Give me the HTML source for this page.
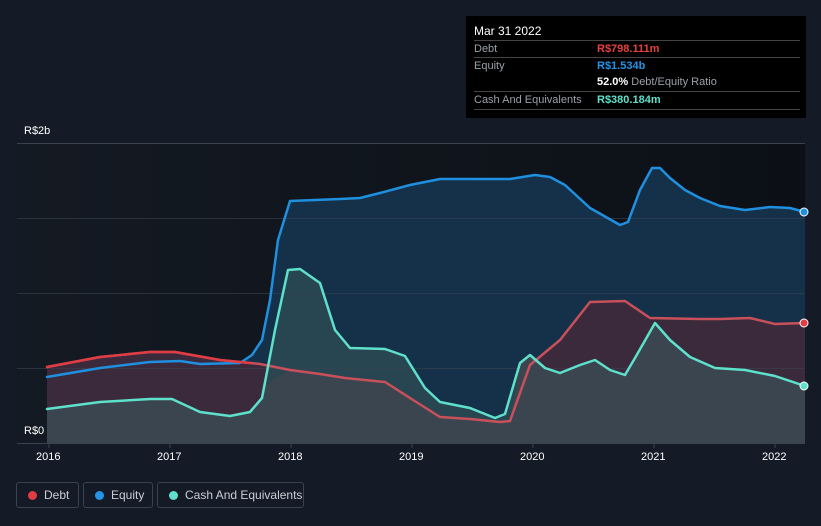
<!DOCTYPE html>
<html><head><meta charset="utf-8"><style>
body{margin:0;width:821px;height:526px;background:#151b26;font-family:"Liberation Sans",sans-serif;overflow:hidden;position:relative}
.tt{position:absolute;left:466px;top:16px;width:340px;height:102px;background:#000;color:#fff;font-size:11px}
.tt .r{position:absolute;left:8px;width:326px;border-top:1px solid #444;height:17px}
.lbl{color:#9aa0a8;position:absolute;left:0;top:2px}
.val{position:absolute;left:123px;top:2px;font-weight:bold}
.ax{position:absolute;color:#fff;font-size:11px}
.leg{position:absolute;top:482px;height:26px;border:1px solid #3a4150;border-radius:3px;color:#c9ced6;font-size:12px;box-sizing:border-box}
.leg i{position:absolute;left:11px;top:8px;width:9px;height:9px;border-radius:50%}
.leg span{position:absolute;left:27px;top:5px}
</style></head><body>
<svg width="821" height="526" style="position:absolute;left:0;top:0">
<defs><linearGradient id="bg" x1="0" x2="1"><stop offset="0" stop-color="#141a23"/><stop offset="1" stop-color="#0c1016"/></linearGradient></defs>
<rect x="17" y="143" width="788" height="300" fill="url(#bg)"/>
<path d="M47,377 L100,368 L150,362 L180,361 L200,364 L240,363 L252,355 L262,340 L270,300 L278,240 L290,201 L340,199 L360,198 L380,193 L410,185 L440,179 L500,179 L510,179 L535,175 L550,177 L565,185 L590,208 L620,225 L628,222 L640,190 L652,168 L660,168 L670,178 L685,190 L700,198 L720,206 L745,210 L770,207 L790,208 L805,212 L805,443 L47,443Z" fill="#153049"/>
<path d="M47,367 L100,357 L150,352 L175,352 L220,360 L260,364 L290,370 L320,374 L345,378 L385,382 L410,398 L440,417 L470,419 L500,422 L510,421 L530,365 L560,340 L590,302 L625,301 L650,318 L700,319 L720,319 L750,318 L775,324 L805,323 L805,443 L47,443Z" fill="#3a2a3c"/>
<path d="M47,409 L100,402 L150,399 L172,399 L200,412 L230,416 L250,412 L262,398 L275,330 L288,270 L300,269 L320,283 L335,330 L350,348 L385,349 L405,356 L425,388 L440,402 L470,408 L495,418 L505,414 L520,363 L530,355 L545,368 L560,373 L580,365 L595,360 L610,370 L625,375 L635,358 L655,323 L670,340 L690,357 L715,368 L745,370 L775,376 L805,386 L805,443 L47,443Z" fill="#2b4a52" opacity="0.85"/>
<path d="M47,443 L47,409 L100,402 L150,399 L172,399 L200,412 L230,416 L250,412 L262,398 L265,385 L290,370 L320,374 L345,378 L385,382 L410,398 L440,417 L470,419 L500,422 L510,421 L520,363 L530,355 L545,368 L560,373 L580,365 L595,360 L610,370 L625,375 L635,358 L655,323 L670,340 L690,357 L715,368 L745,370 L775,376 L805,386 L805,443Z" fill="#3a4550"/>
<g stroke="#3a4250" stroke-width="1"><line x1="17" y1="143.5" x2="805" y2="143.5"/><line x1="17" y1="218.5" x2="805" y2="218.5" stroke-opacity=".6"/><line x1="17" y1="293.5" x2="805" y2="293.5" stroke-opacity=".6"/><line x1="17" y1="368.5" x2="805" y2="368.5" stroke-opacity=".6"/><line x1="17" y1="443.5" x2="805" y2="443.5"/></g>
<g fill="none" stroke-width="2.5" stroke-linejoin="round" stroke-linecap="round">
<path stroke="#1f8fe0" d="M47,377 L100,368 L150,362 L180,361 L200,364 L240,363 L252,355 L262,340 L270,300 L278,240 L290,201 L340,199 L360,198 L380,193 L410,185 L440,179 L500,179 L510,179 L535,175 L550,177 L565,185 L590,208 L620,225 L628,222 L640,190 L652,168 L660,168 L670,178 L685,190 L700,198 L720,206 L745,210 L770,207 L790,208 L805,212"/>
<path stroke="#c8505a" d="M47,367 L100,357 L150,352 L175,352 L220,360 L260,364 L290,370 L320,374 L345,378 L385,382 L410,398 L440,417 L470,419 L500,422 L510,421 L530,365 L560,340 L590,302 L625,301 L650,318 L700,319 L720,319 L750,318 L775,324 L805,323"/>
<path stroke="#e03c44" d="M47,367 L100,357 L150,352 L175,352 L220,360 L250,363"/>
<path stroke="#5ee0cb" d="M47,409 L100,402 L150,399 L172,399 L200,412 L230,416 L250,412 L262,398 L275,330 L288,270 L300,269 L320,283 L335,330 L350,348 L385,349 L405,356 L425,388 L440,402 L470,408 L495,418 L505,414 L520,363 L530,355 L545,368 L560,373 L580,365 L595,360 L610,370 L625,375 L635,358 L655,323 L670,340 L690,357 L715,368 L745,370 L775,376 L805,386"/>
</g>
<circle cx="804" cy="212" r="4" fill="#1f8fe0" stroke="#fff" stroke-width="1"/>
<circle cx="804" cy="323" r="4" fill="#e03c44" stroke="#fff" stroke-width="1"/>
<circle cx="804" cy="386" r="4" fill="#5ee0cb" stroke="#fff" stroke-width="1"/>
<g stroke="#3a4250"><line x1="49" y1="443" x2="49" y2="448"/><line x1="170" y1="443" x2="170" y2="448"/><line x1="291" y1="443" x2="291" y2="448"/><line x1="412" y1="443" x2="412" y2="448"/><line x1="533" y1="443" x2="533" y2="448"/><line x1="654" y1="443" x2="654" y2="448"/><line x1="775" y1="443" x2="775" y2="448"/></g>
</svg>
<div class="ax" style="left:24px;top:125px">R$2b</div>
<div class="ax" style="left:24px;top:425px">R$0</div>
<div class="ax" style="left:36px;top:451px">2016</div>
<div class="ax" style="left:157px;top:451px">2017</div>
<div class="ax" style="left:278px;top:451px">2018</div>
<div class="ax" style="left:399px;top:451px">2019</div>
<div class="ax" style="left:520px;top:451px">2020</div>
<div class="ax" style="left:641px;top:451px">2021</div>
<div class="ax" style="left:762px;top:451px">2022</div>
<div class="tt">
<div style="position:absolute;left:8px;top:8px;font-size:12px">Mar 31 2022</div>
<div class="r" style="top:24px"><span class="lbl">Debt</span><span class="val" style="color:#e8403f">R$798.111m</span></div>
<div class="r" style="top:41px"><span class="lbl">Equity</span><span class="val" style="color:#2394e6">R$1.534b</span></div>
<div class="r" style="top:58px;border-top:none"><span class="val">52.0% <b style="color:#9aa0a8;font-weight:normal">Debt/Equity Ratio</b></span></div>
<div class="r" style="top:75px"><span class="lbl">Cash And Equivalents</span><span class="val" style="color:#5ee0cb">R$380.184m</span></div>
<div class="r" style="top:93px;height:0"></div>
</div>
<div class="leg" style="left:16px;width:63px"><i style="background:#e03c44"></i><span>Debt</span></div>
<div class="leg" style="left:83px;width:70px"><i style="background:#2394e6"></i><span>Equity</span></div>
<div class="leg" style="left:157px;width:147px"><i style="background:#5ee0cb"></i><span>Cash And Equivalents</span></div>
</body></html>
